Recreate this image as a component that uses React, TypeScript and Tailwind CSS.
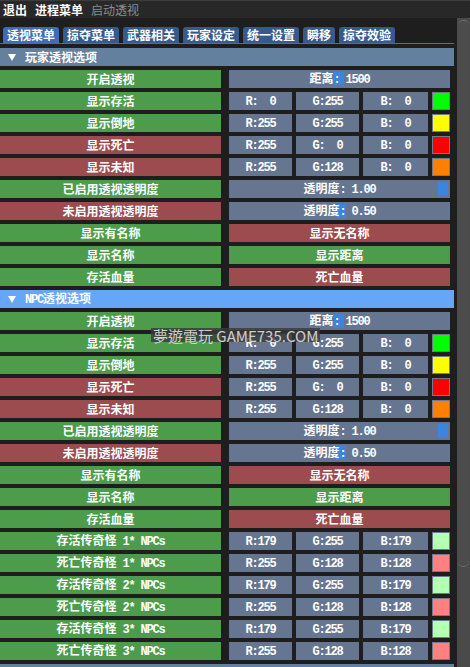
import React from "react";

const CJK = /([\u2000-\u206f\u3000-\u9fff\uff00-\uffef]+)/;

// split CJK runs from latin runs so latin gets a half-width mono look
function Txt({ s }: { s: string }) {
  const parts = s.split(CJK).filter((p) => p !== "");
  return (
    <span className="whitespace-pre">
      {parts.map((p, i) =>
        CJK.test(p) ? (
          <span key={i}>{p}</span>
        ) : (
          <span key={i} className="font-['Liberation_Mono'] tracking-[-1.2px]">
            {p}
          </span>
        ),
      )}
    </span>
  );
}

type Tone = "green" | "red" | "slate";

function Cell({ tone, text, className = "" }: { tone: Tone; text: string; className?: string }) {
  const bg =
    tone === "green" ? "bg-[#4c9c4c]" : tone === "red" ? "bg-[#9c4c4f]" : "bg-[#667691]";
  return (
    <div
      className={`${bg} h-[18px] shrink-0 flex items-center justify-center text-[12px] leading-none font-bold text-white ${className}`}
    >
      <Txt s={text} />
    </div>
  );
}

function Slider({ text, grab }: { text: string; grab: number }) {
  return (
    <div className="relative bg-[#667691] h-[18px] w-[221px] flex items-center justify-center text-[12px] leading-none font-bold text-white">
      <div
        className="absolute top-[2px] bottom-[2px] w-[10px] bg-[#3d84de]"
        style={{ left: grab }}
      />
      <span className="relative">
        <Txt s={text} />
      </span>
    </div>
  );
}

function Rgb({ r, g, b }: { r: number; g: number; b: number }) {
  const pad = (n: number) => String(n).padStart(3, " ");
  return (
    <div className="flex gap-[4px] w-[221px]">
      <Cell tone="slate" text={`R:${pad(r)}`} className="w-[63px]" />
      <Cell tone="slate" text={`G:${pad(g)}`} className="w-[63px]" />
      <Cell tone="slate" text={`B:${pad(b)}`} className="w-[65px]" />
      <div
        className="w-[18px] h-[18px] border border-[#6f7a8c]"
        style={{ backgroundColor: `rgb(${r},${g},${b})` }}
      />
    </div>
  );
}

function Row({ left, tone, children }: { left: string; tone: Tone; children: React.ReactNode }) {
  return (
    <div className="flex gap-[8px] h-[18px] shrink-0">
      <Cell tone={tone} text={left} className="w-[221px]" />
      {children}
    </div>
  );
}

function Header({ title, hot }: { title: string; hot?: boolean }) {
  return (
    <div
      className={`${hot ? "bg-[#66a6f6]" : "bg-[#63809f]"} h-[18px] shrink-0 w-[454px] flex items-center gap-[9px] pl-[8px] text-[12px] leading-none font-bold text-white`}
    >
      <svg width="8" height="7" viewBox="0 0 8 7">
        <polygon points="0,0 8,0 4,7" fill="#fff" />
      </svg>
      <Txt s={title} />
    </div>
  );
}

function EspRows() {
  return (
    <>
      <Row left="开启透视" tone="green">
        <Slider text="距离: 1500" grab={105} />
      </Row>
      <Row left="显示存活" tone="green">
        <Rgb r={0} g={255} b={0} />
      </Row>
      <Row left="显示倒地" tone="green">
        <Rgb r={255} g={255} b={0} />
      </Row>
      <Row left="显示死亡" tone="red">
        <Rgb r={255} g={0} b={0} />
      </Row>
      <Row left="显示未知" tone="red">
        <Rgb r={255} g={128} b={0} />
      </Row>
      <Row left="已启用透视透明度" tone="green">
        <Slider text="透明度: 1.00" grab={209} />
      </Row>
      <Row left="未启用透视透明度" tone="red">
        <Slider text="透明度: 0.50" grab={107} />
      </Row>
      <Row left="显示有名称" tone="green">
        <Cell tone="red" text="显示无名称" className="w-[221px]" />
      </Row>
      <Row left="显示名称" tone="green">
        <Cell tone="green" text="显示距离" className="w-[221px]" />
      </Row>
      <Row left="存活血量" tone="green">
        <Cell tone="red" text="死亡血量" className="w-[221px]" />
      </Row>
    </>
  );
}

const TABS = ["透视菜单", "掠夺菜单", "武器相关", "玩家设定", "统一设置", "瞬移", "掠夺效验"];

export default function App() {
  return (
    <div className="relative w-[470px] h-[667px] overflow-hidden bg-[#1e1e1e] flex flex-col font-['Noto_Sans_CJK_SC',sans-serif]">
      {/* menu bar */}
      <div className="h-[18px] shrink-0 bg-[#282828] border-t border-[#3c3c3c] flex items-center gap-[7px] pl-[3px] text-[12px] leading-none">
        <span className="font-bold text-white">退出</span>
        <span className="font-bold text-white ml-[1px]">进程菜单</span>
        <span className="text-[#8c8c8c] ml-[1px]">启动透视</span>
      </div>

      <div className="flex flex-1 min-h-0">
        <div className="w-[457px] shrink-0 pt-[9px] flex flex-col gap-[4px]">
          <div className="w-[454px] h-[17px] shrink-0 flex items-end gap-[4px] pl-[3px] border-b border-[#4470ab]">
            {TABS.map((t, i) => (
              <div
                key={t}
                className={`${i === 0 ? "bg-[#3d6db3]" : "bg-[#355a8b]"} h-[16px] px-[4px] rounded-t-[3px] flex items-center text-[12px] leading-none font-bold text-white`}
              >
                {t}
              </div>
            ))}
          </div>

          <Header title="玩家透视选项" />
          <EspRows />

          <Header title="NPC透视选项" hot />
          <EspRows />
          <Row left="存活传奇怪 1* NPCs" tone="green">
            <Rgb r={179} g={255} b={179} />
          </Row>
          <Row left="死亡传奇怪 1* NPCs" tone="green">
            <Rgb r={255} g={128} b={128} />
          </Row>
          <Row left="存活传奇怪 2* NPCs" tone="green">
            <Rgb r={179} g={255} b={179} />
          </Row>
          <Row left="死亡传奇怪 2* NPCs" tone="green">
            <Rgb r={255} g={128} b={128} />
          </Row>
          <Row left="存活传奇怪 3* NPCs" tone="green">
            <Rgb r={179} g={255} b={179} />
          </Row>
          <Row left="死亡传奇怪 3* NPCs" tone="green">
            <Rgb r={255} g={128} b={128} />
          </Row>
          <div className="bg-[#63809f] h-[18px] w-[454px] shrink-0" />
        </div>

        {/* scrollbar */}
        <div className="w-[13px] bg-[#4a4a4a] pt-[2px] px-[1px]">
          <div className="h-[547px] rounded-[5px] bg-[#4c4c4c] border-t border-b border-[#6a6a6a]" />
        </div>
      </div>

      {/* watermark */}
      <div className="absolute left-[151px] top-[328px] h-[14px] px-[2px] bg-[#3a3a3a]/80 flex items-center text-[15px] leading-none text-[#cfcfcf] font-['Noto_Sans_CJK_TC',sans-serif] whitespace-nowrap">
        夢遊電玩 GAME735.COM
      </div>
    </div>
  );
}
